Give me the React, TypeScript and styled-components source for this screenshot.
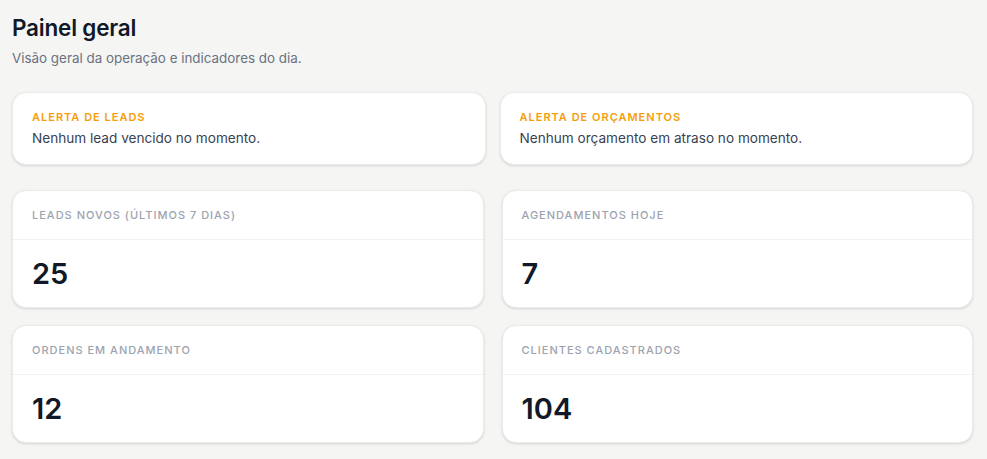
import React from "react";
import styled, { createGlobalStyle } from "styled-components";

const Global = createGlobalStyle`
  html, body { margin: 0; padding: 0; background: #f5f5f4; }
  body { font-family: Inter, "Noto Sans", Roboto, sans-serif; -webkit-font-smoothing: antialiased; }
  * { box-sizing: border-box; }
`;

const Page = styled.main`
  padding: 14px 14px 12px 12px;
  display: flex;
  flex-direction: column;
  gap: 25px;
`;

const Header = styled.header`
  display: flex;
  flex-direction: column;
  gap: 7px;
`;

const Title = styled.h1`
  margin: 0;
  font-size: 22.5px;
  line-height: 28px;
  font-weight: 600;
  color: #111827;
  letter-spacing: -0.2px;
`;

const Subtitle = styled.p`
  margin: 0;
  font-size: 13.4px;
  line-height: 18px;
  color: #6b7280;
`;

const Grid = styled.section<{ $gap: number; $rowGap?: number }>`
  display: grid;
  grid-template-columns: 1fr 1fr;
  column-gap: ${(p) => p.$gap}px;
  row-gap: ${(p) => p.$rowGap ?? 0}px;
`;

const Card = styled.div`
  background: #ffffff;
  border: 1px solid #ebebeb;
  border-radius: 14px;
  box-shadow: 0 1px 3px rgba(0, 0, 0, 0.1), 0 1px 2px rgba(0, 0, 0, 0.04);
  overflow: hidden;
`;

const AlertCard = styled(Card)`
  padding: 16px 19px 16px;
  display: flex;
  flex-direction: column;
  gap: 3px;
`;

const AlertTitle = styled.div`
  font-size: 11px;
  line-height: 16px;
  font-weight: 600;
  letter-spacing: 1px;
  text-transform: uppercase;
  color: #f59e0b;
`;

const AlertText = styled.div`
  font-size: 13.6px;
  line-height: 20px;
  color: #374151;
`;

const StatHeader = styled.div`
  padding: 16px 19px;
  border-bottom: 1px solid #f1f1f1;
  font-size: 11px;
  line-height: 16px;
  font-weight: 500;
  letter-spacing: 1px;
  text-transform: uppercase;
  color: #9ca3af;
`;

const StatValue = styled.div`
  padding: 16px 19px 15px;
  font-size: 29px;
  line-height: 36px;
  font-weight: 600;
  color: #111827;
`;

const alerts = [
  { title: "Alerta de leads", text: "Nenhum lead vencido no momento." },
  { title: "Alerta de orçamentos", text: "Nenhum orçamento em atraso no momento." },
];

const stats = [
  { label: "Leads novos (últimos 7 dias)", value: "25" },
  { label: "Agendamentos hoje", value: "7" },
  { label: "Ordens em andamento", value: "12" },
  { label: "Clientes cadastrados", value: "104" },
];

export default function App() {
  return (
    <>
      <Global />
      <Page>
        <Header>
          <Title>Painel geral</Title>
          <Subtitle>Visão geral da operação e indicadores do dia.</Subtitle>
        </Header>
        <Grid $gap={14}>
          {alerts.map((a) => (
            <AlertCard key={a.title}>
              <AlertTitle>{a.title}</AlertTitle>
              <AlertText>{a.text}</AlertText>
            </AlertCard>
          ))}
        </Grid>
        <Grid $gap={18} $rowGap={17}>
          {stats.map((s) => (
            <Card key={s.label}>
              <StatHeader>{s.label}</StatHeader>
              <StatValue>{s.value}</StatValue>
            </Card>
          ))}
        </Grid>
      </Page>
    </>
  );
}
